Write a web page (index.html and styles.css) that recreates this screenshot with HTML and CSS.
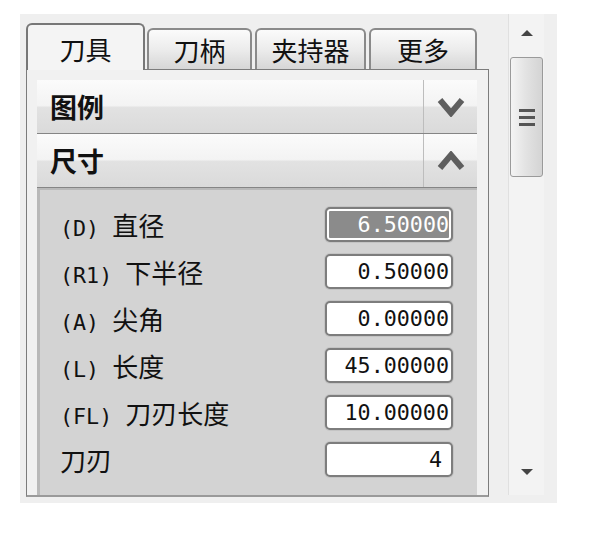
FILE: index.html
```html
<!DOCTYPE html>
<html>
<head>
    <meta charset="utf-8">
    <title>刀具参数</title>
    <link rel="stylesheet" href="styles.css">
</head>
<body>

<div class="window">
    <div class="tabview">
        <div class="tab-strip">
            <div class="tab active">刀具</div>
            <div class="tab tab-holder">刀柄</div>
            <div class="tab tab-clamp">夹持器</div>
            <div class="tab tab-more">更多</div>
        </div>
        <div class="panel">
            <div class="section-bar">
                <div class="section-title">图例</div>
                <div class="section-btn">
                    <svg width="28" height="20" viewBox="0 0 28 20"><polyline points="3,3 14,16 25,3" fill="none" stroke="#5e5e5e" stroke-width="6"/></svg>
                </div>
            </div>
            <div class="section-bar">
                <div class="section-title">尺寸</div>
                <div class="section-btn">
                    <svg width="28" height="20" viewBox="0 0 28 20"><polyline points="3,17 14,4 25,17" fill="none" stroke="#5e5e5e" stroke-width="6"/></svg>
                </div>
            </div>
            <div class="params">
                <div class="param-row">
                    <div class="param-label"><span class="code">(D) </span>直径</div>
                    <div class="param-value selected"><span>6.50000</span></div>
                </div>
                <div class="param-row">
                    <div class="param-label"><span class="code">(R1) </span>下半径</div>
                    <div class="param-value"><span>0.50000</span></div>
                </div>
                <div class="param-row">
                    <div class="param-label"><span class="code">(A) </span>尖角</div>
                    <div class="param-value"><span>0.00000</span></div>
                </div>
                <div class="param-row">
                    <div class="param-label"><span class="code">(L) </span>长度</div>
                    <div class="param-value"><span>45.00000</span></div>
                </div>
                <div class="param-row">
                    <div class="param-label"><span class="code">(FL) </span>刀刃长度</div>
                    <div class="param-value"><span>10.00000</span></div>
                </div>
                <div class="param-row">
                    <div class="param-label">刀刃</div>
                    <div class="param-value integer"><span>4</span></div>
                </div>
            </div>
        </div>
    </div>

    <div class="scrollbar">
        <div class="arrow arrow-up"></div>
        <div class="thumb">
            <div class="grip"></div>
            <div class="grip"></div>
            <div class="grip"></div>
        </div>
        <div class="track"></div>
        <div class="arrow arrow-down"></div>
    </div>
</div>

</body>
</html>
```

FILE: styles.css
```css
body {
    margin: 0;
    padding: 14px 0 0 20px;
    background-color: #fff;
    font-family: "Noto Sans CJK SC", sans-serif;
    color: #111;
}
.window {
    display: flex;
    width: 537px;
    height: 489px;
    background-color: #efefef;
}
.tabview {
    display: flex;
    flex-direction: column;
    padding: 9px 0 6px 6px;
    width: 463px;
}
.tab-strip {
    display: flex;
    align-items: flex-end;
    height: 46px;
}
.tab {
    box-sizing: border-box;
    height: 41px;
    border: 2px solid #8a8a8a;
    border-bottom: none;
    border-radius: 6px 6px 0 0;
    background: linear-gradient(#fbfbfb, #ececec 50%, #d6d6d6);
    font-size: 26px;
    line-height: 40px;
    text-align: center;
    margin-left: 3px;
}
.tab.active {
    height: 47px;
    width: 119px;
    margin-left: 0;
    margin-bottom: -1px;
    background: #f4f4f4;
    border-color: #777;
    line-height: 48px;
    position: relative;
    z-index: 1;
}
.tab-holder {
    width: 105px;
    margin-left: 2px;
}
.tab-clamp {
    width: 111px;
}
.tab-more {
    width: 108px;
}
.panel {
    flex: 1;
    display: flex;
    flex-direction: column;
    border: 1px solid #7c7c7c;
    border-bottom: 2px solid #9a9a9a;
    padding: 10px 11px 0 10px;
    background-color: #f1f1f1;
    overflow: hidden;
}
.section-bar {
    display: flex;
    height: 53px;
    border-bottom: 1px solid #858585;
    background: linear-gradient(#fbfbfb, #f3f3f3 48%, #e2e2e2 52%, #dadada);
}
.section-title {
    flex: 1;
    padding-left: 13px;
    font-size: 27px;
    font-weight: bold;
    line-height: 53px;
}
.section-btn {
    width: 53px;
    border-left: 1px solid #bdbdbd;
    display: flex;
    align-items: center;
    justify-content: center;
}
.params {
    flex: 1;
    background-color: #d3d3d3;
    box-shadow: inset 3px 2px 0 #b9b9b9;
    padding-top: 19px;
    display: flex;
    flex-direction: column;
    gap: 12px;
}
.param-row {
    display: flex;
    align-items: center;
    height: 35px;
}
.param-label {
    box-sizing: border-box;
    width: 288px;
    padding-left: 23px;
    font-size: 26px;
    white-space: nowrap;
}
.code {
    font-family: "DejaVu Sans Mono", monospace;
    font-size: 21.7px;
}
.param-value {
    box-sizing: border-box;
    width: 128px;
    height: 35px;
    border: 2px solid #7d7d7d;
    border-radius: 5px;
    box-shadow: 0 0 0 1px #c4c4c4;
    background-color: #fff;
    text-align: right;
    white-space: nowrap;
    font-family: "DejaVu Sans Mono", monospace;
    font-size: 21.7px;
    line-height: 31px;
}
.param-value span {
    display: inline-block;
    margin-right: 2px;
}
.param-value.integer span {
    margin-right: 9px;
}
.param-value.selected {
    background-color: #8b8b8b;
    box-shadow: 0 0 0 1px #c4c4c4, inset 0 0 0 2px #fff;
    color: #fff;
}
.scrollbar {
    display: flex;
    flex-direction: column;
    align-items: center;
    width: 35px;
    height: 481px;
    margin-left: 19px;
    background-color: #f3f3f3;
    border-left: 1px solid #e0e0e0;
}
.arrow {
    width: 0;
    height: 0;
    border-left: 6px solid transparent;
    border-right: 6px solid transparent;
}
.arrow-up {
    margin-top: 16px;
    border-bottom: 6px solid #444;
}
.arrow-down {
    margin-bottom: 20px;
    border-top: 6px solid #444;
}
.thumb {
    box-sizing: border-box;
    width: 33px;
    height: 120px;
    margin-top: 21px;
    border: 1px solid #9a9a9a;
    border-radius: 3px;
    background: linear-gradient(90deg, #f4f4f4, #e2e2e2 50%, #d4d4d4);
    display: flex;
    flex-direction: column;
    align-items: center;
    justify-content: center;
    gap: 4px;
}
.grip {
    width: 16px;
    height: 3px;
    background-color: #555;
}
.track {
    flex: 1;
}
```
